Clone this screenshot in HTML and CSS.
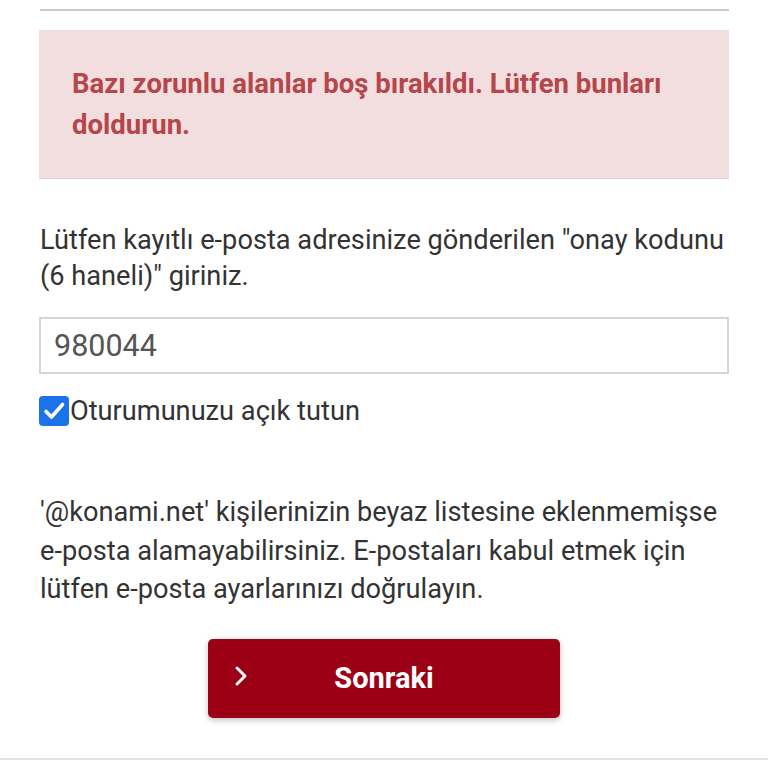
FILE: index.html
```html
<!DOCTYPE html>
<html lang="tr">
<head>
<meta charset="utf-8">
<link rel="stylesheet" href="styles.css">
</head>
<body>
<div class="page">
  <div class="rule"></div>
  <div class="alert">Bazı zorunlu alanlar boş bırakıldı. Lütfen bunları doldurun.</div>
  <p class="intro">Lütfen kayıtlı e-posta adresinize gönderilen "onay kodunu (6 haneli)" giriniz.</p>
  <div class="field">980044</div>
  <label class="keep">
    <span class="box"><svg viewBox="0 0 30 30" width="30" height="30"><path d="M7 15.5 L12.5 21 L23.5 8.5" fill="none" stroke="#fff" stroke-width="3.6" stroke-linecap="round" stroke-linejoin="round"/></svg></span>
    <span class="keep-text">Oturumunuzu açık tutun</span>
  </label>
  <p class="note">'@konami.net' kişilerinizin beyaz listesine eklenmemişse e-posta alamayabilirsiniz. E-postaları kabul etmek için lütfen e-posta ayarlarınızı doğrulayın.</p>
  <div class="actions">
    <button class="next">
      <svg class="chev" viewBox="0 0 14 22" width="14" height="22"><path d="M3 3 L11 11 L3 19" fill="none" stroke="#fff" stroke-width="3" stroke-linecap="round" stroke-linejoin="round"/></svg>
      <span>Sonraki</span>
    </button>
  </div>
</div>
<div class="bottom-rule"></div>
</body>
</html>
```
FILE: styles.css
```css
html, body {
  margin: 0;
  padding: 0;
  background: #fff;
}
body {
  font-family: Roboto, "Liberation Sans", sans-serif;
  color: #333;
  width: 768px;
  height: 768px;
  overflow: hidden;
}
.page {
  padding: 0 39px;
}
.rule {
  height: 2px;
  background: #c9c9c9;
  margin: 9px 0 0 1px;
}
.alert {
  margin-top: 19px;
  height: 149px;
  box-sizing: border-box;
  padding: 33px 33px;
  background: #f2dede;
  border-bottom: 1px solid #e6d3d3;
  color: #b5464b;
  font-weight: 700;
  font-size: 27.5px;
  line-height: 41px;
}
.intro {
  margin: 43px 0 0 1px;
  font-size: 27.2px;
  line-height: 36px;
}
.field {
  margin-top: 23px;
  height: 57px;
  box-sizing: border-box;
  border: 2px solid #d6d6d6;
  padding-left: 13px;
  display: flex;
  align-items: center;
  font-size: 30.5px;
  color: #555;
}
.keep {
  margin-top: 22px;
  display: flex;
  align-items: center;
  height: 30px;
  font-size: 27.2px;
}
.box {
  width: 30px;
  height: 30px;
  border-radius: 4px;
  background: #1a73e8;
  display: block;
  margin-right: 1px;
}
.box svg {
  display: block;
}
.note {
  margin: 67px 0 0 1px;
  font-size: 27.2px;
  line-height: 38.5px;
}
.actions {
  margin-top: 30px;
  display: flex;
  justify-content: center;
}
.next {
  position: relative;
  width: 352px;
  height: 79px;
  border: none;
  border-radius: 5px;
  background: #9b0014;
  color: #fff;
  font-family: Roboto, "Liberation Sans", sans-serif;
  font-weight: 700;
  font-size: 29px;
  box-shadow: 0 2px 6px rgba(0,0,0,0.25);
  display: flex;
  align-items: center;
  justify-content: center;
  padding: 0;
}
.chev {
  position: absolute;
  left: 26px;
  top: 26px;
}
.bottom-rule {
  position: absolute;
  top: 758px;
  left: 0;
  width: 768px;
  height: 2px;
  background: #e3e3e3;
}
```
